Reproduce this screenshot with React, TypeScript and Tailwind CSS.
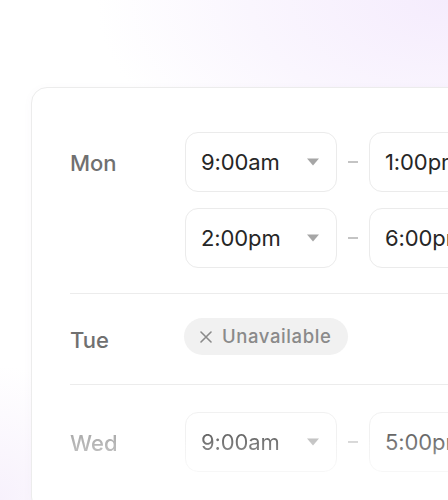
import React from "react";

function Caret() {
  return (
    <svg width="14" height="8" viewBox="0 0 14 8" className="shrink-0">
      <path d="M1 0.5h12L7 7.5z" fill="#a6a6a6" />
    </svg>
  );
}

function TimeSelect({ value }: { value: string }) {
  return (
    <div className="flex h-[60px] w-[152px] shrink-0 items-center justify-between rounded-[13px] border border-[#ebebeb] bg-white pl-[15px] pr-[16px]">
      <span className="text-[22px] tracking-[-0.1px] text-[#262626]">{value}</span>
      <Caret />
    </div>
  );
}

function Range({ from, to }: { from: string; to: string }) {
  return (
    <div className="flex items-center">
      <TimeSelect value={from} />
      <span className="mx-[11px] h-[2px] w-[10px] bg-[#c4c4c4]" />
      <TimeSelect value={to} />
    </div>
  );
}

export default function App() {
  return (
    <div
      className="relative h-[500px] w-[448px] overflow-hidden bg-white"
      style={{ fontFamily: "Inter, 'Liberation Sans', sans-serif" }}
    >
      <div className="pointer-events-none absolute inset-0 bg-[radial-gradient(ellipse_440px_250px_at_100%_0%,#f5ecfd_0%,#faf6fe_45%,rgba(255,255,255,0)_80%)]" />
      <div className="pointer-events-none absolute inset-0 bg-[radial-gradient(ellipse_140px_180px_at_0%_100%,#f7f1fc_0%,rgba(255,255,255,0)_75%)]" />

      <div className="relative ml-[31px] mt-[87px] w-[520px] rounded-[16px] border border-[#ececec] bg-white pl-[38px] pt-[44px] shadow-[0_2px_10px_rgba(120,100,160,0.04)]">
        {/* Mon */}
        <div className="flex pb-[25px]">
          <div className="flex h-[60px] w-[115px] shrink-0 items-center pt-[3px] text-[22px] font-medium text-[#707070]">
            Mon
          </div>
          <div className="flex flex-col gap-[16px]">
            <Range from="9:00am" to="1:00pm" />
            <Range from="2:00pm" to="6:00pm" />
          </div>
        </div>

        <div className="h-px bg-[#ececec]" />

        {/* Tue */}
        <div className="flex items-start pt-[24px] pb-[29px]">
          <div className="flex h-[37px] w-[115px] shrink-0 items-center pt-[7px] text-[22px] font-medium text-[#707070]">
            Tue
          </div>
          <div className="-ml-px flex h-[37px] items-center gap-[10px] rounded-full bg-[#f1f1f1] pl-[16px] pr-[17px] text-[18.5px] font-medium tracking-[0.6px] text-[#8a8a8a]">
            <svg width="12" height="12" viewBox="0 0 12 12">
              <path d="M1 1l10 10M11 1L1 11" stroke="#8a8a8a" strokeWidth="1.6" strokeLinecap="round" />
            </svg>
            <span>Unavailable</span>
          </div>
        </div>

        <div className="h-px bg-[#ececec]" />

        {/* Wed */}
        <div className="flex pt-[27px] pb-[40px] opacity-70 [mask-image:linear-gradient(to_bottom,black_40%,transparent_100%)]">
          <div className="flex h-[60px] w-[115px] shrink-0 items-center pt-[3px] text-[22px] font-medium text-[#8a8a8a]">
            Wed
          </div>
          <Range from="9:00am" to="5:00pm" />
        </div>
      </div>
    </div>
  );
}
